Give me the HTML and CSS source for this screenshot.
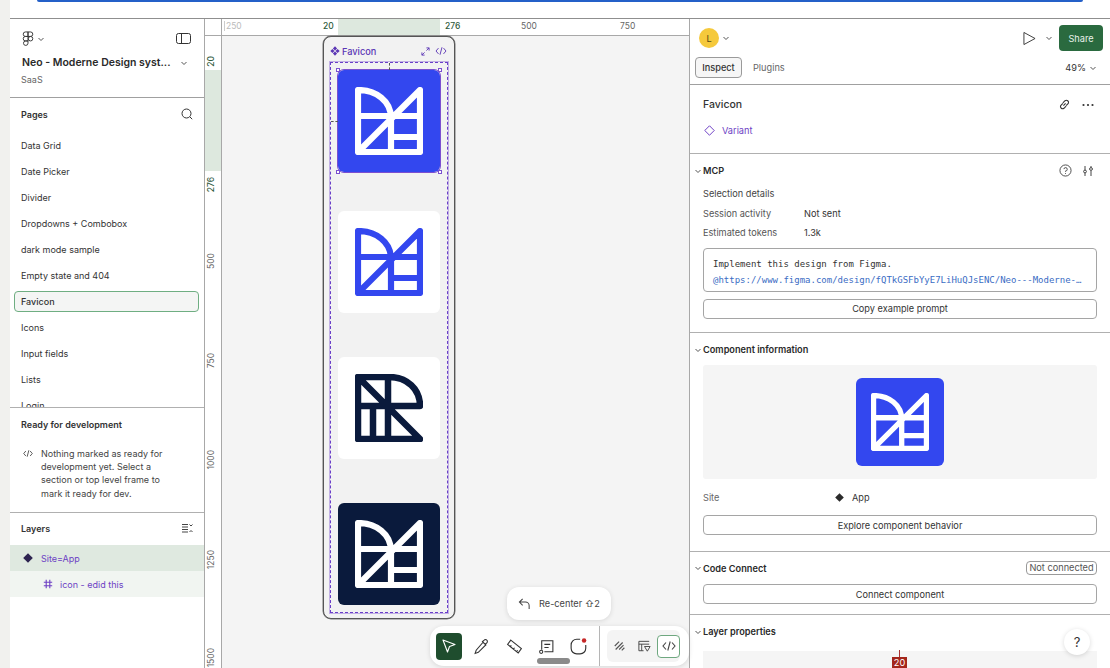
FILE: index.html
```html
<!DOCTYPE html>
<html lang="en">
<head>
  <meta charset="UTF-8">
  <title>Neo - Moderne Design system - Favicon</title>
  <link rel="stylesheet" href="styles.css">
</head>
<body>
  <svg class="defs" width="0" height="0">
    <symbol id="logo-m" viewBox="0 0 68 68">
      <path d="M3 3V65H65V3L3 65M3 3C21 3 36 14 36 31V65M3 29H65M36 50H65" fill="none" stroke="currentColor" stroke-width="6.2" stroke-linejoin="round" stroke-linecap="round"/>
    </symbol>
    <symbol id="logo-r" viewBox="0 0 68 68">
      <path d="M3 32V65H65L3 3V32H65C65 15 52 3 34 3H3M33 3V65M18 32V65" fill="none" stroke="currentColor" stroke-width="6.5" stroke-linejoin="round" stroke-linecap="round"/>
    </symbol>
    <symbol id="chev" viewBox="0 0 8 8">
      <path d="M1.5 3L4 5.5 6.5 3" fill="none" stroke="currentColor" stroke-width="1"/>
    </symbol>
    <symbol id="code" viewBox="0 0 14 12">
      <path d="M4 2.5L1 6l3 3.5M10 2.5L13 6l-3 3.5M8.2 1.5L5.8 10.5" fill="none" stroke="currentColor" stroke-width="1.1"/>
    </symbol>
    <symbol id="comp" viewBox="0 0 12 12">
      <path d="M6 .4L8.500 2.900 6 5.400 3.500 2.900zM2.900 3.500L5.400 6 2.900 8.500 .4 6zM9.100 3.500L11.600 6 9.100 8.500 6.600 6zM6 6.600L8.500 9.100 6 11.600 3.500 9.100z" fill="currentColor"/>
    </symbol>
  </svg>

  <div class="topstrip"><div class="loadbar"></div></div>

  <div class="app">
    <aside class="left">
      <div class="file-head">
        <div class="file-tools">
          <div class="row-gap">
            <svg class="fig" viewBox="0 0 12 16" width="12" height="15" fill="none" stroke="#333" stroke-width="1">
              <path d="M6 1H3.300a2.400 2.400 0 000 4.800H6zM6 5.800H3.300a2.400 2.400 0 000 4.800H6zM6 10.600H3.300A2.400 2.400 0 106 13zM6 1h2.700a2.400 2.400 0 010 4.800H6zM11.100 8.200a2.400 2.400 0 11-4.800 0 2.400 2.400 0 014.800 0z"/>
            </svg>
            <svg class="chev" width="8" height="8"><use href="#chev"/></svg>
          </div>
          <svg viewBox="0 0 15 11" width="15" height="11" fill="none" stroke="#333" stroke-width="1"><rect x=".5" y=".5" width="14" height="10" rx="2"/><path d="M5.500 .5v10"/></svg>
        </div>
        <div class="file-name"><span>Neo - Moderne Design syst...</span><svg class="chev" width="8" height="8"><use href="#chev"/></svg></div>
        <div class="file-team">SaaS</div>
      </div>

      <div class="pages">
        <div class="panel-title">
          <span>Pages</span>
          <svg viewBox="0 0 12 12" width="12" height="12" fill="none" stroke="#333" stroke-width="1"><circle cx="5.500" cy="5.500" r="4.500"/><path d="M9 9l2.200 2.200"/></svg>
        </div>
        <ul class="page-list">
          <li>Data Grid</li>
          <li>Date Picker</li>
          <li>Divider</li>
          <li>Dropdowns + Combobox</li>
          <li>dark mode sample</li>
          <li>Empty state and 404</li>
          <li class="current">Favicon</li>
          <li>Icons</li>
          <li>Input fields</li>
          <li>Lists</li>
          <li>Login</li>
        </ul>
      </div>

      <div class="ready">
        <div class="ready-title">Ready for development</div>
        <div class="ready-body">
          <svg width="10" height="9" class="ready-icon"><use href="#code"/></svg>
          <p>Nothing marked as ready for development yet. Select a section or top level frame to mark it ready for dev.</p>
        </div>
      </div>

      <div class="layers">
        <div class="panel-title layers-title">
          <span>Layers</span>
          <svg viewBox="0 0 11 11" width="11" height="11" fill="none" stroke="#444" stroke-width="1"><path d="M0 1.500h6M0 4h6M0 6.500h6M0 9h6M7.500 1.500L9 3l1.500-1.500M7.500 9L9 7.500 10.500 9"/></svg>
        </div>
        <div class="layer layer-main">
          <svg viewBox="0 0 10 10" width="10" height="10"><path d="M5 .2L9.800 5 5 9.800 .2 5z" fill="#2d2350"/></svg>
          <span>Site=App</span>
        </div>
        <div class="layer layer-sub">
          <svg viewBox="0 0 10 10" width="10" height="10" fill="none" stroke="#6d3fc4" stroke-width="1.100"><path d="M3.200 .8v8.400M6.800 .8v8.400M.8 3.200h8.400M.8 6.800h8.400"/></svg>
          <span>icon - edid this</span>
        </div>
      </div>
    </aside>

    <main class="stage">
      <div class="ruler-top">
        <div class="ruler-corner"></div>
        <div class="ruler-track">
          <span class="rt-mark rt-faint" style="left:2px">250</span>
          <span class="rt-band"></span>
          <span class="rt-mark rt-sel" style="left:101px">20</span>
          <span class="rt-mark rt-sel" style="left:223px">276</span>
          <span class="rt-mark" style="left:299px">500</span>
          <span class="rt-mark" style="left:398px">750</span>
        </div>
      </div>
      <div class="stage-body">
        <div class="ruler-left">
          <span class="rl-band"></span>
          <span class="rl-mark rl-sel" style="top:20px">20</span>
          <span class="rl-mark rl-sel" style="top:141px">276</span>
          <span class="rl-mark" style="top:217px">500</span>
          <span class="rl-mark" style="top:317px">750</span>
          <span class="rl-mark" style="top:414px">1000</span>
          <span class="rl-mark" style="top:514px">1250</span>
          <span class="rl-mark" style="top:612px">1500</span>
        </div>
        <div class="canvas">
          <div class="frame">
            <div class="frame-head">
              <div class="frame-name"><svg width="10" height="10"><use href="#comp"/></svg>Favicon</div>
              <div class="frame-tools">
                <svg viewBox="0 0 10 10" width="9" height="9" fill="none" stroke="#5b36b5" stroke-width="1"><path d="M6 1h3v3M9 1L6 4M1 6v3h3M1 9l3-3"/></svg>
                <svg width="12" height="10"><use href="#code"/></svg>
              </div>
            </div>
            <div class="variants">
              <div class="tile tile-blue tile-picked"><svg width="68" height="68"><use href="#logo-m"/></svg><i class="c c1"></i><i class="c c2"></i><i class="c c3"></i><i class="c c4"></i></div>
              <div class="tile tile-white-blue"><svg width="68" height="68"><use href="#logo-m"/></svg></div>
              <div class="tile tile-white-dark"><svg width="68" height="68"><use href="#logo-r"/></svg></div>
              <div class="tile tile-dark"><svg width="68" height="68"><use href="#logo-m"/></svg></div>
            </div>
          </div>

          <div class="recenter">
            <svg viewBox="0 0 14 14" width="13" height="13" fill="none" stroke="#444" stroke-width="1.100"><path d="M5 2L1.500 5.500 5 9M1.500 5.500H8a4 4 0 014 4V13"/></svg>
            <span>Re-center ⇧2</span>
          </div>

          <div class="toolbar">
            <div class="tool-main">
              <button class="tool tool-on"><svg viewBox="0 0 16 16" width="16" height="16" fill="none" stroke="#fff" stroke-width="1.100" stroke-linejoin="round"><path d="M2 2l12 4.500-5.500 2L6.500 14z"/></svg></button>
              <button class="tool"><svg viewBox="0 0 16 16" width="17" height="17" fill="none" stroke="#333" stroke-width="1"><path d="M9.500 4L12 6.500 5 13.500l-3 1 1-3zM9 3.500l1.500-1.500a1.700 1.700 0 012.500 0 1.700 1.700 0 010 2.500L11.500 6M8.500 3l4 4"/></svg></button>
              <button class="tool"><svg viewBox="0 0 16 16" width="17" height="17" fill="none" stroke="#333" stroke-width="1"><path d="M4.500 2L14.500 10 11.500 14 1.500 6zM5 7l-1 1.200M8 9.200l-1 1.300M11 11.500l-1 1.200"/></svg></button>
              <button class="tool"><svg viewBox="0 0 16 16" width="17" height="17" fill="none" stroke="#333" stroke-width="1"><path d="M3.500 11V2.500h10.500v10.500H6M6 6h5.500M6 9h4"/><circle cx="3" cy="13" r="1.500"/></svg></button>
              <button class="tool"><svg viewBox="0 0 16 16" width="18" height="18"><path d="M9 2H6a5 5 0 00-5 5v3a5 5 0 005 5h3a5 5 0 005-5V7" fill="none" stroke="#333" stroke-width="1"/><circle cx="12.500" cy="3" r="2" fill="#c62828"/></svg></button>
            </div>
            <div class="tool-dev">
              <button class="tool tool-small"><svg viewBox="0 0 16 16" width="14" height="14" fill="none" stroke="#555" stroke-width="1.300"><path d="M2 8l5-5M3 12l8-8M7 12l5-5M10 13l3-3"/></svg></button>
              <button class="tool tool-small"><svg viewBox="0 0 16 16" width="15" height="15" fill="none" stroke="#444" stroke-width="1"><path d="M2 2.500h11M2 5.500h11M2 2.500v10h5M5 5.500v7M8 8h6l-3 5z"/></svg></button>
              <button class="tool tool-code"><svg width="14" height="12"><use href="#code"/></svg></button>
            </div>
            <div class="tool-grip"></div>
          </div>
        </div>
      </div>
    </main>

    <aside class="right">
      <div class="top-actions">
        <div class="row-gap">
          <div class="avatar">L</div>
          <svg class="chev" width="8" height="8"><use href="#chev"/></svg>
        </div>
        <div class="row-gap share-wrap">
          <svg viewBox="0 0 14 16" width="13" height="15" fill="none" stroke="#333" stroke-width="1"><path d="M1 1.500L13 8 1 14.500z" stroke-linejoin="round"/></svg>
          <svg class="chev chev-play" width="8" height="8"><use href="#chev"/></svg>
          <button class="share">Share</button>
        </div>
      </div>
      <div class="tabs">
        <div class="row-gap tab-group">
          <span class="tab tab-on">Inspect</span>
          <span class="tab">Plugins</span>
        </div>
        <div class="zoom-level">49% <svg class="chev" width="8" height="8"><use href="#chev"/></svg></div>
      </div>

      <section class="sec sec-node">
        <div class="node-head">
          <h2>Favicon</h2>
          <div class="row-gap node-tools">
            <svg viewBox="0 0 12 12" width="13" height="13" fill="none" stroke="#333" stroke-width="1"><path d="M5 7l2-2M4.500 5L2.500 7a2 2 0 003 2.500L7.500 7.500M7.500 7l2-2a2 2 0 00-3-2.500L4.500 4.500"/></svg>
            <svg viewBox="0 0 12 4" width="12" height="4" fill="#333"><circle cx="1.500" cy="2" r="1.100"/><circle cx="6" cy="2" r="1.100"/><circle cx="10.500" cy="2" r="1.100"/></svg>
          </div>
        </div>
        <div class="variant-tag">
          <svg viewBox="0 0 10 10" width="11" height="11" fill="none" stroke="#6d3fc4" stroke-width=".9"><path d="M5 .7L9.300 5 5 9.300 .7 5z"/></svg>
          Variant
        </div>
      </section>

      <section class="sec sec-mcp">
        <div class="sec-head">
          <h3><svg class="chev" width="8" height="8"><use href="#chev"/></svg>MCP</h3>
          <div class="row-gap head-tools">
            <svg viewBox="0 0 14 14" width="13" height="13" fill="none" stroke="#444" stroke-width="1"><circle cx="7" cy="7" r="6"/><path d="M5.300 5.500A1.800 1.800 0 117 7.500V8.300M7 9.800v.9"/></svg>
            <svg viewBox="0 0 12 12" width="12" height="12" fill="none" stroke="#444" stroke-width="1"><path d="M3 1v4M3 8v3M9 1v1.500M9 6v5"/><circle cx="3" cy="6.500" r="1.400"/><circle cx="9" cy="4" r="1.400"/></svg>
          </div>
        </div>
        <div class="kv kv-first">Selection details</div>
        <div class="kv"><span>Session activity</span><b>Not sent</b></div>
        <div class="kv"><span>Estimated tokens</span><b>1.3k</b></div>
        <div class="prompt">
          <div>Implement this design from Figma.</div>
          <div class="prompt-link">@https://www.figma.com/design/fQTkGSFbYyE7LiHuQJsENC/Neo---Moderne-…</div>
        </div>
        <button class="wide">Copy example prompt</button>
      </section>

      <section class="sec sec-comp">
        <h3><svg class="chev" width="8" height="8"><use href="#chev"/></svg>Component information</h3>
        <div class="preview">
          <div class="preview-tile"><svg width="58" height="58"><use href="#logo-m"/></svg></div>
        </div>
        <div class="site-row">
          <span>Site</span>
          <b><svg viewBox="0 0 10 10" width="9" height="9"><path d="M5 .2L9.800 5 5 9.800 .2 5z" fill="#2b2b2b"/></svg>App</b>
        </div>
        <button class="wide">Explore component behavior</button>
      </section>

      <section class="sec sec-connect">
        <div class="sec-head">
          <h3><svg class="chev" width="8" height="8"><use href="#chev"/></svg>Code Connect</h3>
          <span class="badge">Not connected</span>
        </div>
        <button class="wide">Connect component</button>
      </section>

      <section class="sec-props">
        <h3><svg class="chev" width="8" height="8"><use href="#chev"/></svg>Layer properties</h3>
        <div class="props-box"><div class="size-pin"></div><div class="size-tag">20</div></div>
      </section>

      <div class="help">?</div>
    </aside>
  </div>
</body>
</html>
```

FILE: styles.css
```css
* {
  box-sizing: border-box;
}
html, body {
  margin: 0;
  height: 668px;
  overflow: hidden;
}
body {
  background: #fff;
  color: #333;
  font-family: Inter, "Liberation Sans", sans-serif;
  font-size: 9.2px;
  border-left: 10px solid #f1f1ee;
}
.defs {
  position: absolute;
}
button {
  font: inherit;
  color: inherit;
  background: none;
}
h2, h3, p, ul {
  margin: 0;
  padding: 0;
}
.topstrip {
  height: 19px;
  padding: 0 27px;
  border-bottom: 1px solid #8f8f8f;
}
.loadbar {
  height: 2px;
  background: #2460c8;
  border-radius: 0 0 4px 4px;
}
.app {
  display: flex;
  height: 649px;
}
.row-gap {
  display: flex;
  align-items: center;
  gap: 3px;
}
.chev {
  color: #555;
  flex: none;
}

/* left panel */
.left {
  width: 195px;
  flex: none;
  display: flex;
  flex-direction: column;
  font-size: 9px;
  border-right: 1px solid #a8a8a8;
}
.file-head {
  height: 79px;
  padding: 12px 13px 0 12px;
  border-bottom: 1px solid #a0a0a0;
}
.file-tools {
  display: flex;
  justify-content: space-between;
  align-items: center;
  height: 15px;
  margin-bottom: 10px;
}
.file-name {
  display: flex;
  justify-content: space-between;
  align-items: center;
  padding-right: 3px;
  font-size: 10.5px;
  font-weight: 600;
  color: #2a2a2a;
}
.file-team {
  margin: 5px 0 0 -1px;
  color: #666;
}
.pages {
  height: 310px;
  overflow: hidden;
  border-bottom: 1px solid #b0b0b0;
}
.panel-title {
  display: flex;
  justify-content: space-between;
  align-items: center;
  padding: 10px 11px 0 11px;
  font-weight: 600;
  color: #333;
}
.page-list {
  list-style: none;
  padding: 13px 5px 0 4px;
}
.page-list li {
  height: 26px;
  line-height: 26px;
  padding-left: 7px;
}
.page-list .current {
  height: 21px;
  line-height: 19px;
  margin: 2px 0 3px;
  font-weight: 500;
  background: #f4f5f4;
  border: 1px solid #6fae82;
  border-radius: 4px;
  padding-left: 6px;
}
.ready {
  height: 105px;
  padding: 11px 11px 0;
  border-bottom: 1px solid #b0b0b0;
}
.ready-title {
  font-weight: 600;
}
.ready-body {
  display: flex;
  gap: 8px;
  margin-top: 17px;
}
.ready-icon {
  flex: none;
  margin: 2px 0 0 2px;
}
.ready-body p {
  width: 125px;
  line-height: 13.2px;
  color: #444;
}
.layers {
  flex: 1;
}
.layers-title {
  height: 32px;
  padding-top: 0;
  padding-bottom: 2px;
}
.layer {
  display: flex;
  align-items: center;
  height: 26px;
  color: #6d3fc4;
}
.layer-main {
  gap: 8px;
  padding-left: 13px;
  background: #dfe9e0;
}
.layer-sub {
  gap: 7px;
  padding-left: 33px;
  background: #f1f5f1;
}

/* canvas */
.stage {
  width: 485px;
  flex: none;
  display: flex;
  flex-direction: column;
  border-right: 1px solid #a8a8a8;
}
.ruler-top {
  display: flex;
  height: 17px;
  border-bottom: 1px solid #a8a8a8;
}
.ruler-corner {
  width: 17px;
  flex: none;
  border-right: 1px solid #a8a8a8;
}
.ruler-track {
  position: relative;
  flex: 1;
}
.rt-mark, .rl-mark {
  position: absolute;
  font-size: 8.5px;
  color: #666;
}
.rt-mark {
  top: 2px;
}
.rt-faint {
  padding-left: 1px;
  color: #bbb;
  border-left: 1px solid #ccc;
}
.rt-sel, .rl-sel {
  color: #2f5a3c;
  font-weight: 500;
}
.rt-band {
  position: absolute;
  left: 116px;
  top: 0;
  width: 102px;
  height: 16px;
  background: #dde8de;
}
.stage-body {
  display: flex;
  flex: 1;
}
.ruler-left {
  position: relative;
  width: 17px;
  flex: none;
  border-right: 1px solid #a8a8a8;
}
.rl-band {
  position: absolute;
  left: 0;
  top: 34px;
  width: 16px;
  height: 101px;
  background: #dde8de;
}
.rl-mark {
  left: 1px;
  width: 15px;
  text-align: center;
  writing-mode: vertical-rl;
  transform: rotate(180deg);
}
.canvas {
  position: relative;
  flex: 1;
  background: #f4f4f4;
}
.frame {
  position: absolute;
  left: 101px;
  top: 0;
  width: 132px;
  height: 583px;
  padding: 0 6px;
  background: #f2f2f2;
  border: 1px solid #555;
  border-radius: 8px;
  box-shadow: 0 0 0 .5px #777;
}
.frame-head {
  display: flex;
  justify-content: space-between;
  align-items: center;
  height: 25px;
  color: #5b36b5;
  padding: 3px 1px 0 0;
}
.frame-name {
  display: flex;
  align-items: center;
  gap: 2px;
  font-weight: 500;
}
.frame-tools {
  display: flex;
  align-items: center;
  gap: 5px;
}
.variants {
  display: flex;
  flex-direction: column;
  gap: 44px;
  height: 551px;
  padding: 7px 0 0 7px;
  border: 1px dashed #6a3fc8;
  box-shadow: 0 0 0 1px rgba(123, 79, 208, 0.4);
}
.tile {
  position: relative;
  display: flex;
  align-items: center;
  justify-content: center;
  width: 102px;
  height: 102px;
  border-radius: 6px;
}
.tile-blue {
  background: #3347ef;
  color: #fff;
}
.tile-white-blue {
  background: #fff;
  color: #3347ef;
}
.tile-white-dark {
  background: #fff;
  color: #0a1a3c;
}
.tile-dark {
  background: #0a1a3c;
  color: #fff;
}
.tile-picked {
  margin-bottom: -5px;
  outline: 1px solid #7b4fd0;
}
/* measure guides from the frame edge to the selected tile */
.tile-picked::before {
  content: "";
  position: absolute;
  left: 50%;
  top: -7px;
  height: 7px;
  border-left: 1px dashed #555;
}
.tile-picked::after {
  content: "";
  position: absolute;
  top: 50%;
  left: -7px;
  width: 7px;
  border-top: 1px dashed #555;
}
.c {
  position: absolute;
  width: 4px;
  height: 4px;
  background: #fff;
  border: 1px solid #7b4fd0;
}
.c1 { left: -2px; top: -2px; }
.c2 { right: -2px; top: -2px; }
.c3 { left: -2px; bottom: -2px; }
.c4 { right: -2px; bottom: -2px; }
.recenter {
  position: absolute;
  left: 285px;
  top: 551px;
  display: flex;
  align-items: center;
  gap: 8px;
  width: 104px;
  height: 33px;
  padding-left: 11px;
  background: #fff;
  border-radius: 12px;
  box-shadow: 0 1px 5px rgba(0, 0, 0, 0.12);
  color: #444;
}
.toolbar {
  position: absolute;
  left: 208px;
  top: 590px;
  display: flex;
  align-items: center;
  width: 259px;
  height: 40px;
  padding-left: 6px;
  background: #fff;
  border-radius: 14px;
  box-shadow: 0 1px 5px rgba(0, 0, 0, 0.12);
}
.tool-main {
  display: flex;
  align-items: center;
  gap: 6.5px;
  width: 164px;
  height: 40px;
  border-right: 1px solid #b5b5b5;
}
.tool {
  display: flex;
  align-items: center;
  justify-content: center;
  width: 26px;
  height: 27px;
  padding: 0;
  border: 0;
  border-radius: 4px;
}
.tool-on {
  background: #1f4d2e;
}
.tool-dev {
  display: flex;
  align-items: center;
  height: 32px;
  margin-left: 7px;
  background: #f4f4f4;
  border-radius: 6px;
}
.tool-small {
  width: 25px;
}
.tool-code {
  width: 23px;
  height: 23px;
  color: #444;
  background: #fff;
  border: 1px solid #6fa880;
}
.tool-grip {
  position: absolute;
  left: 107px;
  bottom: 2px;
  width: 33px;
  height: 6px;
  background: #8a8a8a;
  border-radius: 3px;
}

/* right panel */
.right {
  position: relative;
  flex: 1;
  min-width: 0;
}
.top-actions {
  display: flex;
  justify-content: space-between;
  align-items: center;
  height: 38px;
  padding: 0 7px 0 9px;
}
.avatar {
  display: flex;
  align-items: center;
  justify-content: center;
  width: 20px;
  height: 20px;
  background: #f5c93c;
  border-radius: 50%;
  color: #5a4a10;
}
.share-wrap {
  gap: 0;
}
.chev-play {
  margin: 0 6px 0 9px;
}
.share {
  width: 44px;
  height: 26px;
  padding: 0;
  border: 0;
  border-radius: 4px;
  background: #2a6a3f;
  color: #e8f2ea;
}
.tabs {
  display: flex;
  justify-content: space-between;
  align-items: center;
  height: 28px;
  padding: 0 13px 6px 5px;
  border-bottom: 1px solid #a0a0a0;
}
.tab-group {
  gap: 0;
}
.tab {
  display: inline-block;
  height: 21px;
  line-height: 19px;
  padding: 0 9px;
  color: #666;
  border: 1px solid transparent;
}
.tab-on {
  width: 47px;
  padding: 0;
  text-align: center;
  color: #333;
  font-weight: 500;
  background: #f6f6f6;
  border-color: #9a9a9a;
  border-radius: 4px;
  margin-right: 1px;
}
.zoom-level {
  display: flex;
  align-items: center;
  gap: 3px;
}
.sec {
  padding: 0 13px;
  border-bottom: 1px solid #b0b0b0;
}
.sec h3, .sec-props h3 {
  display: flex;
  align-items: center;
  font-size: 9.2px;
  font-weight: 600;
  color: #2a2a2a;
}
.sec h3 .chev, .sec-props h3 .chev {
  margin-left: -9px;
  margin-right: 1px;
}
.sec-node {
  height: 69px;
  padding-top: 13px;
}
.node-head {
  display: flex;
  justify-content: space-between;
  align-items: center;
}
.node-head h2 {
  font-size: 10.5px;
  font-weight: 500;
}
.node-tools {
  gap: 11px;
  margin-right: 3px;
}
.variant-tag {
  display: flex;
  align-items: center;
  gap: 7px;
  margin-top: 14px;
  padding-left: 1px;
  color: #6d3fc4;
}
.sec-mcp {
  height: 179px;
  padding-top: 10px;
}
.sec-head {
  display: flex;
  justify-content: space-between;
  align-items: center;
}
.head-tools {
  gap: 10px;
  margin-right: 3px;
}
.kv {
  display: flex;
  height: 19.5px;
  align-items: center;
  color: #555;
}
.kv-first {
  margin-top: 7px;
  color: #444;
}
.kv span {
  width: 101px;
}
.kv b {
  font-weight: 400;
  color: #333;
}
.prompt {
  height: 44px;
  margin-top: 5px;
  padding: 7px 9px;
  border: 1px solid #a5a5a5;
  border-radius: 4px;
  font-family: "DejaVu Sans Mono", "Liberation Mono", monospace;
  font-size: 9px;
  line-height: 16px;
  white-space: nowrap;
  overflow: hidden;
}
.prompt-link {
  color: #3a6cc4;
}
.wide {
  display: block;
  width: 100%;
  height: 20px;
  margin-top: 7px;
  padding: 0;
  border: 1px solid #a5a5a5;
  border-radius: 4px;
  background: #fff;
}
.sec-comp {
  height: 219px;
  padding-top: 11px;
}
.preview {
  display: flex;
  align-items: center;
  justify-content: center;
  height: 114px;
  margin-top: 10px;
  background: #f5f5f5;
  border-radius: 3px;
}
.preview-tile {
  display: flex;
  align-items: center;
  justify-content: center;
  width: 88px;
  height: 88px;
  background: #3347ef;
  color: #fff;
  border-radius: 6px;
}
.site-row {
  display: flex;
  align-items: center;
  height: 20px;
  margin-top: 8px;
  color: #666;
}
.site-row span {
  width: 132px;
}
.site-row b {
  display: flex;
  align-items: center;
  gap: 8px;
  font-weight: 400;
  color: #333;
}
.sec-comp .wide {
  margin-top: 8px;
}
.sec-connect {
  height: 63px;
  padding-top: 9px;
}
.sec-connect .wide {
  margin-top: 9px;
}
.badge {
  width: 71px;
  height: 14px;
  line-height: 12px;
  text-align: center;
  border: 1px solid #999;
  border-radius: 4px;
  color: #555;
}
.sec-props {
  padding: 11px 13px 0;
}
.props-box {
  position: relative;
  height: 40px;
  margin-top: 14px;
  background: #f5f5f5;
}
.size-pin {
  position: absolute;
  left: 196px;
  top: -1px;
  width: 1px;
  height: 8px;
  background: #a33;
}
.size-tag {
  position: absolute;
  left: 189px;
  top: 6px;
  width: 15px;
  height: 12px;
  text-align: center;
  line-height: 11px;
  background: #a4261c;
  color: #fff;
}
.help {
  position: absolute;
  right: 20px;
  bottom: 13px;
  width: 26px;
  height: 26px;
  line-height: 26px;
  text-align: center;
  background: #fff;
  border-radius: 50%;
  box-shadow: 0 1px 5px rgba(0, 0, 0, 0.15);
  font-size: 13px;
}
```
